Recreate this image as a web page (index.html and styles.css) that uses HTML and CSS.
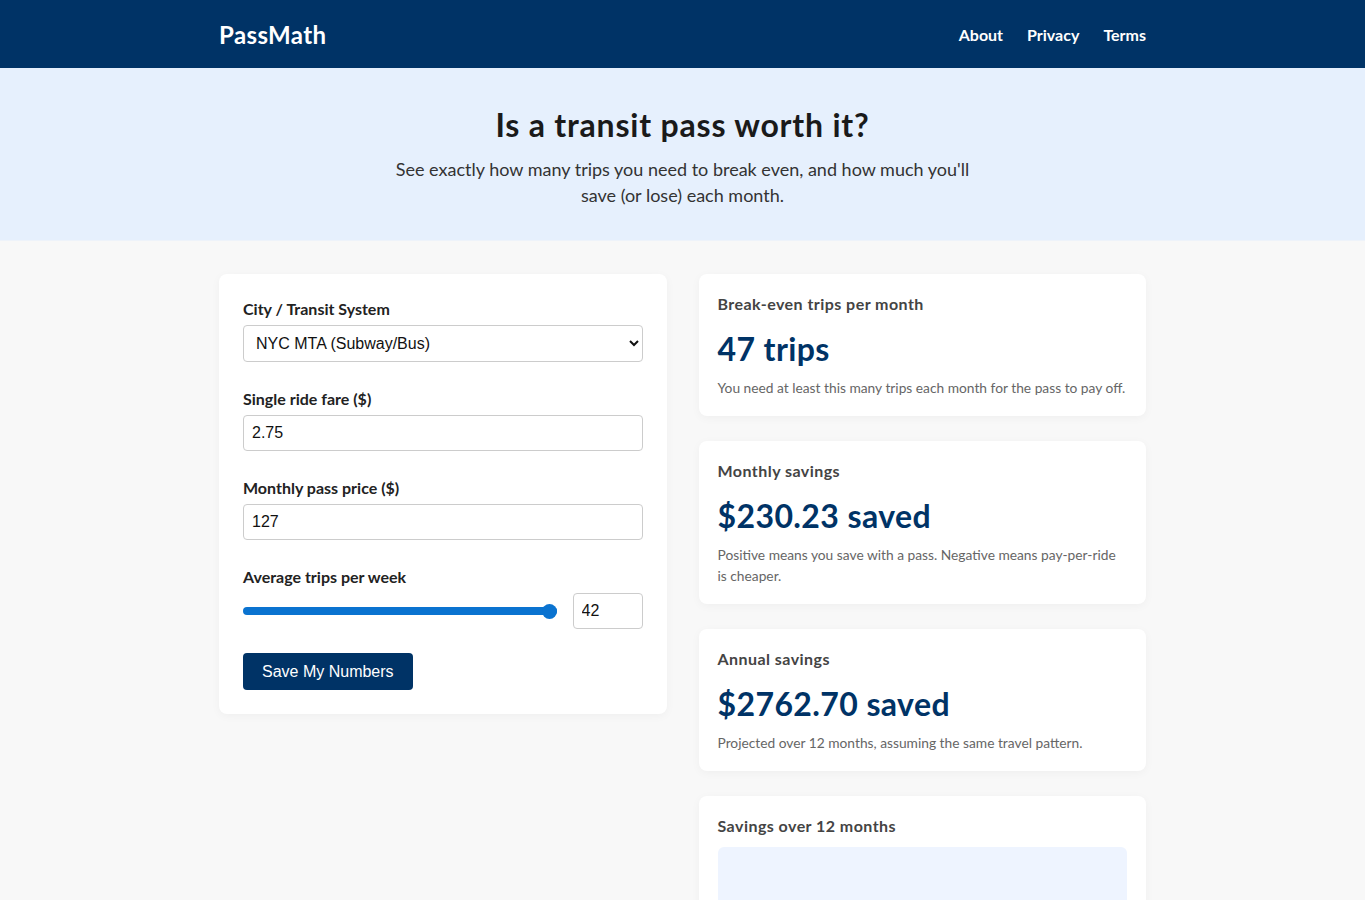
FILE: index.html
```html
<!DOCTYPE html>
<html lang="en">
<head>
    <meta charset="UTF-8">
    <meta name="viewport" content="width=device-width, initial-scale=1.0">
    <title>PassMath - Is a transit pass worth it?</title>
    <link rel="stylesheet" href="styles.css">
</head>
<body>
    <header class="site-header">
        <div class="container header-inner">
            <a class="logo" href="#">PassMath</a>
            <nav class="nav">
                <a href="#">About</a>
                <a href="#">Privacy</a>
                <a href="#">Terms</a>
            </nav>
        </div>
    </header>

    <section class="hero">
        <h1>Is a transit pass worth it?</h1>
        <p>See exactly how many trips you need to break even, and how much you'll save (or lose) each month.</p>
    </section>

    <main class="container layout">
        <div class="card form-card">
            <div class="field">
                <label for="city">City / Transit System</label>
                <select id="city">
                    <option>NYC MTA (Subway/Bus)</option>
                    <option>Chicago CTA</option>
                    <option>Custom</option>
                </select>
            </div>
            <div class="field">
                <label for="fare">Single ride fare ($)</label>
                <input type="text" id="fare" value="2.75">
            </div>
            <div class="field">
                <label for="pass">Monthly pass price ($)</label>
                <input type="text" id="pass" value="127">
            </div>
            <div class="field">
                <label for="trips">Average trips per week</label>
                <div class="range-row">
                    <input type="range" id="trips" min="0" max="42" value="42">
                    <input type="text" class="trips-num" value="42">
                </div>
            </div>
            <button class="btn">Save My Numbers</button>
        </div>

        <div class="results">
            <div class="card result">
                <h3>Break-even trips per month</h3>
                <div class="value">47 trips</div>
                <p>You need at least this many trips each month for the pass to pay off.</p>
            </div>
            <div class="card result">
                <h3>Monthly savings</h3>
                <div class="value">$230.23 saved</div>
                <p>Positive means you save with a pass. Negative means pay-per-ride is cheaper.</p>
            </div>
            <div class="card result">
                <h3>Annual savings</h3>
                <div class="value">$2762.70 saved</div>
                <p>Projected over 12 months, assuming the same travel pattern.</p>
            </div>
            <div class="card result">
                <h3>Savings over 12 months</h3>
                <div class="chart"></div>
            </div>
        </div>
    </main>
</body>
</html>
```

FILE: styles.css
```css
body {
    margin: 0;
    font-family: 'Lato', 'Open Sans', sans-serif;
    background: #f8f8f8;
    color: #222;
}
.container {
    max-width: 927px;
    margin: 0 auto;
}
.site-header {
    background: #003366;
    height: 68px;
}
.header-inner {
    height: 100%;
    display: flex;
    align-items: center;
    justify-content: space-between;
}
.logo {
    color: #fff;
    font-size: 24px;
    font-weight: 700;
    letter-spacing: 0.4px;
    text-decoration: none;
}
.nav {
    display: flex;
    gap: 24px;
}
.nav a {
    color: #fff;
    font-weight: 700;
    font-size: 16px;
    text-decoration: none;
}
.hero {
    background: #e6f0fd;
    text-align: center;
    padding: 37px 20px 32px;
    border-bottom: 1px solid #eef3fa;
}
.hero h1 {
    margin: 0 0 11px;
    font-size: 32px;
    line-height: 40px;
    font-weight: 700;
    letter-spacing: 0.8px;
    color: #1a1a1a;
}
.hero p {
    margin: 0 auto;
    max-width: 580px;
    font-size: 18px;
    line-height: 26px;
    color: #333;
}
.layout {
    display: grid;
    grid-template-columns: 1fr 1fr;
    gap: 32px;
    align-items: start;
    padding-top: 33px;
}
.card {
    background: #fff;
    border-radius: 8px;
    box-shadow: 0 2px 10px rgba(0, 0, 0, 0.04);
}
.form-card {
    padding: 24px;
}
.field {
    margin-bottom: 26px;
}
.field label {
    display: block;
    font-size: 16px;
    line-height: 22px;
    font-weight: 700;
    margin-bottom: 5px;
    color: #222;
}
.field select,
.field input[type="text"] {
    display: block;
    width: 100%;
    box-sizing: border-box;
    height: 36px;
    border: 1px solid #ccc;
    border-radius: 4px;
    font-family: 'Liberation Sans', Arial, sans-serif;
    font-size: 16px;
    padding: 0 8px;
    color: #111;
    background: #fff;
}
.field select {
    height: 37px;
    margin-top: 1px;
}
.range-row {
    display: flex;
    align-items: center;
    gap: 16px;
}
.range-row input[type="range"] {
    flex: 1;
    -webkit-appearance: none;
    appearance: none;
    height: 8px;
    border-radius: 4px;
    background: #0a73d0;
    margin: 0;
}
.range-row input[type="range"]::-webkit-slider-thumb {
    -webkit-appearance: none;
    width: 15px;
    height: 15px;
    border-radius: 50%;
    background: #0a73d0;
}
.range-row input.trips-num {
    width: 70px;
    flex: none;
}
.btn {
    background: #003366;
    color: #fff;
    border: none;
    border-radius: 4px;
    font-family: 'Liberation Sans', Arial, sans-serif;
    font-size: 16px;
    height: 37px;
    padding: 0 19px;
    margin-top: -2px;
}
.results {
    display: flex;
    flex-direction: column;
    gap: 25px;
}
.result {
    padding: 19px 19px 18px;
}
.result h3 {
    margin: 0 0 15px;
    font-size: 16px;
    line-height: 22px;
    font-weight: 700;
    letter-spacing: 0.45px;
    color: #444;
}
.value {
    font-size: 32px;
    line-height: 38px;
    font-weight: 700;
    letter-spacing: 0.4px;
    color: #003366;
    margin-bottom: 9px;
}
.result p {
    margin: 0;
    font-size: 13.78px;
    line-height: 21px;
    color: #666;
}
.chart {
    height: 220px;
    background: #eef4ff;
    border-radius: 6px;
    margin-top: -5px;
}
```
